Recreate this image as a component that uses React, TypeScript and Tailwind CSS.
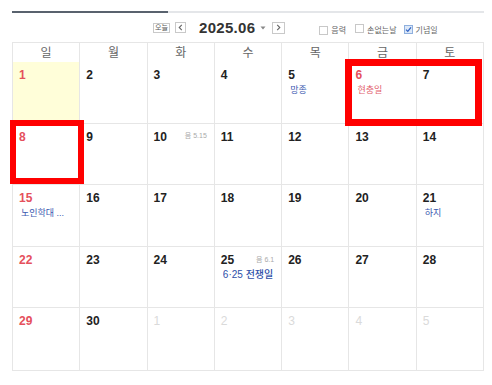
import React from "react";

type Cell = {
  d: number;
  other?: boolean;
  sun?: boolean;
  today?: boolean;
  lunar?: string;
  ev?: { t: string; c: string; bold?: boolean };
};

const rows: Cell[][] = [
  [
    { d: 1, sun: true, today: true },
    { d: 2 },
    { d: 3 },
    { d: 4 },
    { d: 5, ev: { t: "망종", c: "text-[#3a58b0]" } },
    { d: 6, sun: true, ev: { t: "현충일", c: "text-[#e2606c]" } },
    { d: 7 },
  ],
  [
    { d: 8, sun: true },
    { d: 9 },
    { d: 10, lunar: "음 5.15" },
    { d: 11 },
    { d: 12 },
    { d: 13 },
    { d: 14 },
  ],
  [
    { d: 15, sun: true, ev: { t: "노인학대 ...", c: "text-[#3a58b0]" } },
    { d: 16 },
    { d: 17 },
    { d: 18 },
    { d: 19 },
    { d: 20 },
    { d: 21, ev: { t: "하지", c: "text-[#3a58b0]" } },
  ],
  [
    { d: 22, sun: true },
    { d: 23 },
    { d: 24 },
    { d: 25, lunar: "음 6.1", ev: { t: "6·25 전쟁일", c: "text-[#2f4fa8]", bold: true } },
    { d: 26 },
    { d: 27 },
    { d: 28 },
  ],
  [
    { d: 29, sun: true },
    { d: 30 },
    { d: 1, other: true },
    { d: 2, other: true },
    { d: 3, other: true },
    { d: 4, other: true },
    { d: 5, other: true },
  ],
];

const days = ["일", "월", "화", "수", "목", "금", "토"];

const font = { fontFamily: '"Liberation Sans", "Noto Sans CJK KR", sans-serif' };

function Check({ on }: { on?: boolean }) {
  return (
    <span
      className={`inline-flex h-[9px] w-[9px] items-center justify-center border ${
        on ? "border-[#8fb0de] bg-[#dce8f8]" : "border-[#c8c8c8] bg-white"
      }`}
    >
      {on && (
        <svg width="7" height="7" viewBox="0 0 7 7">
          <path d="M1 3.6 L2.8 5.4 L6 1.4" stroke="#2f62c4" strokeWidth="1.3" fill="none" />
        </svg>
      )}
    </span>
  );
}

export default function App() {
  return (
    <div className="h-[385px] w-[492px] bg-white pl-[12px] pt-[11px]" style={font}>
      <div className="relative w-[472px]">
        <div className="flex h-[2px]">
          <div className="w-[156px] bg-[#59626e]" />
          <div className="flex-1 bg-[#e4e6e9]" />
        </div>
        <div className="flex h-[30px] items-center border-b border-[#e6e6e6] pl-[141px]">
          <span className="flex h-[10px] w-[17px] items-center justify-center border border-[#c9c9c9] text-[7px] leading-none text-[#555]">
            오늘
          </span>
          <span className="ml-[5px] flex h-[11px] w-[11px] items-center justify-center border border-[#c9c9c9]">
            <svg width="5" height="7" viewBox="0 0 5 7">
              <path d="M3.8 0.8 L1.2 3.5 L3.8 6.2" stroke="#666" strokeWidth="1.1" fill="none" />
            </svg>
          </span>
          <span className="ml-[13px] text-[15px] font-bold leading-none tracking-[0.3px] text-[#333]">
            2025.06
          </span>
          <svg className="ml-[5px]" width="6" height="4" viewBox="0 0 6 4">
            <path d="M0.5 0.5 L5.5 0.5 L3 3.5 Z" fill="#888" />
          </svg>
          <span className="ml-[6px] flex h-[12px] w-[13px] items-center justify-center border border-[#c9c9c9]">
            <svg width="5" height="7" viewBox="0 0 5 7">
              <path d="M1.2 0.8 L3.8 3.5 L1.2 6.2" stroke="#666" strokeWidth="1.1" fill="none" />
            </svg>
          </span>
          <div className="ml-[34px] mt-[6px] flex items-center text-[8px] text-[#666]">
            <Check />
            <span className="ml-[3px]">음력</span>
            <span className="ml-[9px]"><Check /></span>
            <span className="ml-[3px]">손없는날</span>
            <span className="ml-[7px]"><Check on /></span>
            <span className="ml-[3px]">기념일</span>
          </div>
        </div>
        <div className="border-b border-l border-[#e6e6e6]">
          <div className="grid h-[19px] grid-cols-7">
            {days.map((d) => (
              <div
                key={d}
                className="flex items-center justify-center border-b border-r border-[#e6e6e6] pt-[1px] text-[12px] text-[#666]"
              >
                {d}
              </div>
            ))}
          </div>
          {rows.map((r, i) => (
            <div key={i} className="grid h-[61.6px] grid-cols-7">
              {r.map((c, j) => (
                <div
                  key={j}
                  className={`border-r border-[#e6e6e6] px-[6px] pt-[5px] ${
                    i < 4 ? "border-b" : ""
                  } ${c.today ? "bg-[#fffed9]" : "bg-white"}`}
                >
                  <div className="flex items-center justify-between">
                    <span
                      className={`text-[12px] leading-[16px] ${
                        c.other
                          ? "font-normal text-[#dadada]"
                          : c.sun
                          ? "font-bold text-[#e5505c]"
                          : "font-bold text-[#222]"
                      }`}
                    >
                      {c.d}
                    </span>
                    {c.lunar && (
                      <span className="mr-[1px] text-[7px] text-[#aaa]">{c.lunar}</span>
                    )}
                  </div>
                  {c.ev && (
                    <div
                      className={`ml-[2px] mt-[1px] truncate leading-[12px] ${
                        c.ev.bold ? "text-[10px] font-medium" : "text-[9px]"
                      } ${c.ev.c}`}
                    >
                      {c.ev.t}
                    </div>
                  )}
                </div>
              ))}
            </div>
          ))}
        </div>
        <div className="pointer-events-none absolute left-[333px] top-[48px] h-[67px] w-[137px] border-[7px] border-[#ff0000]" />
        <div className="pointer-events-none absolute left-[-2px] top-[109px] h-[64px] w-[74px] border-[6px] border-[#ff0000]" />
      </div>
    </div>
  );
}
